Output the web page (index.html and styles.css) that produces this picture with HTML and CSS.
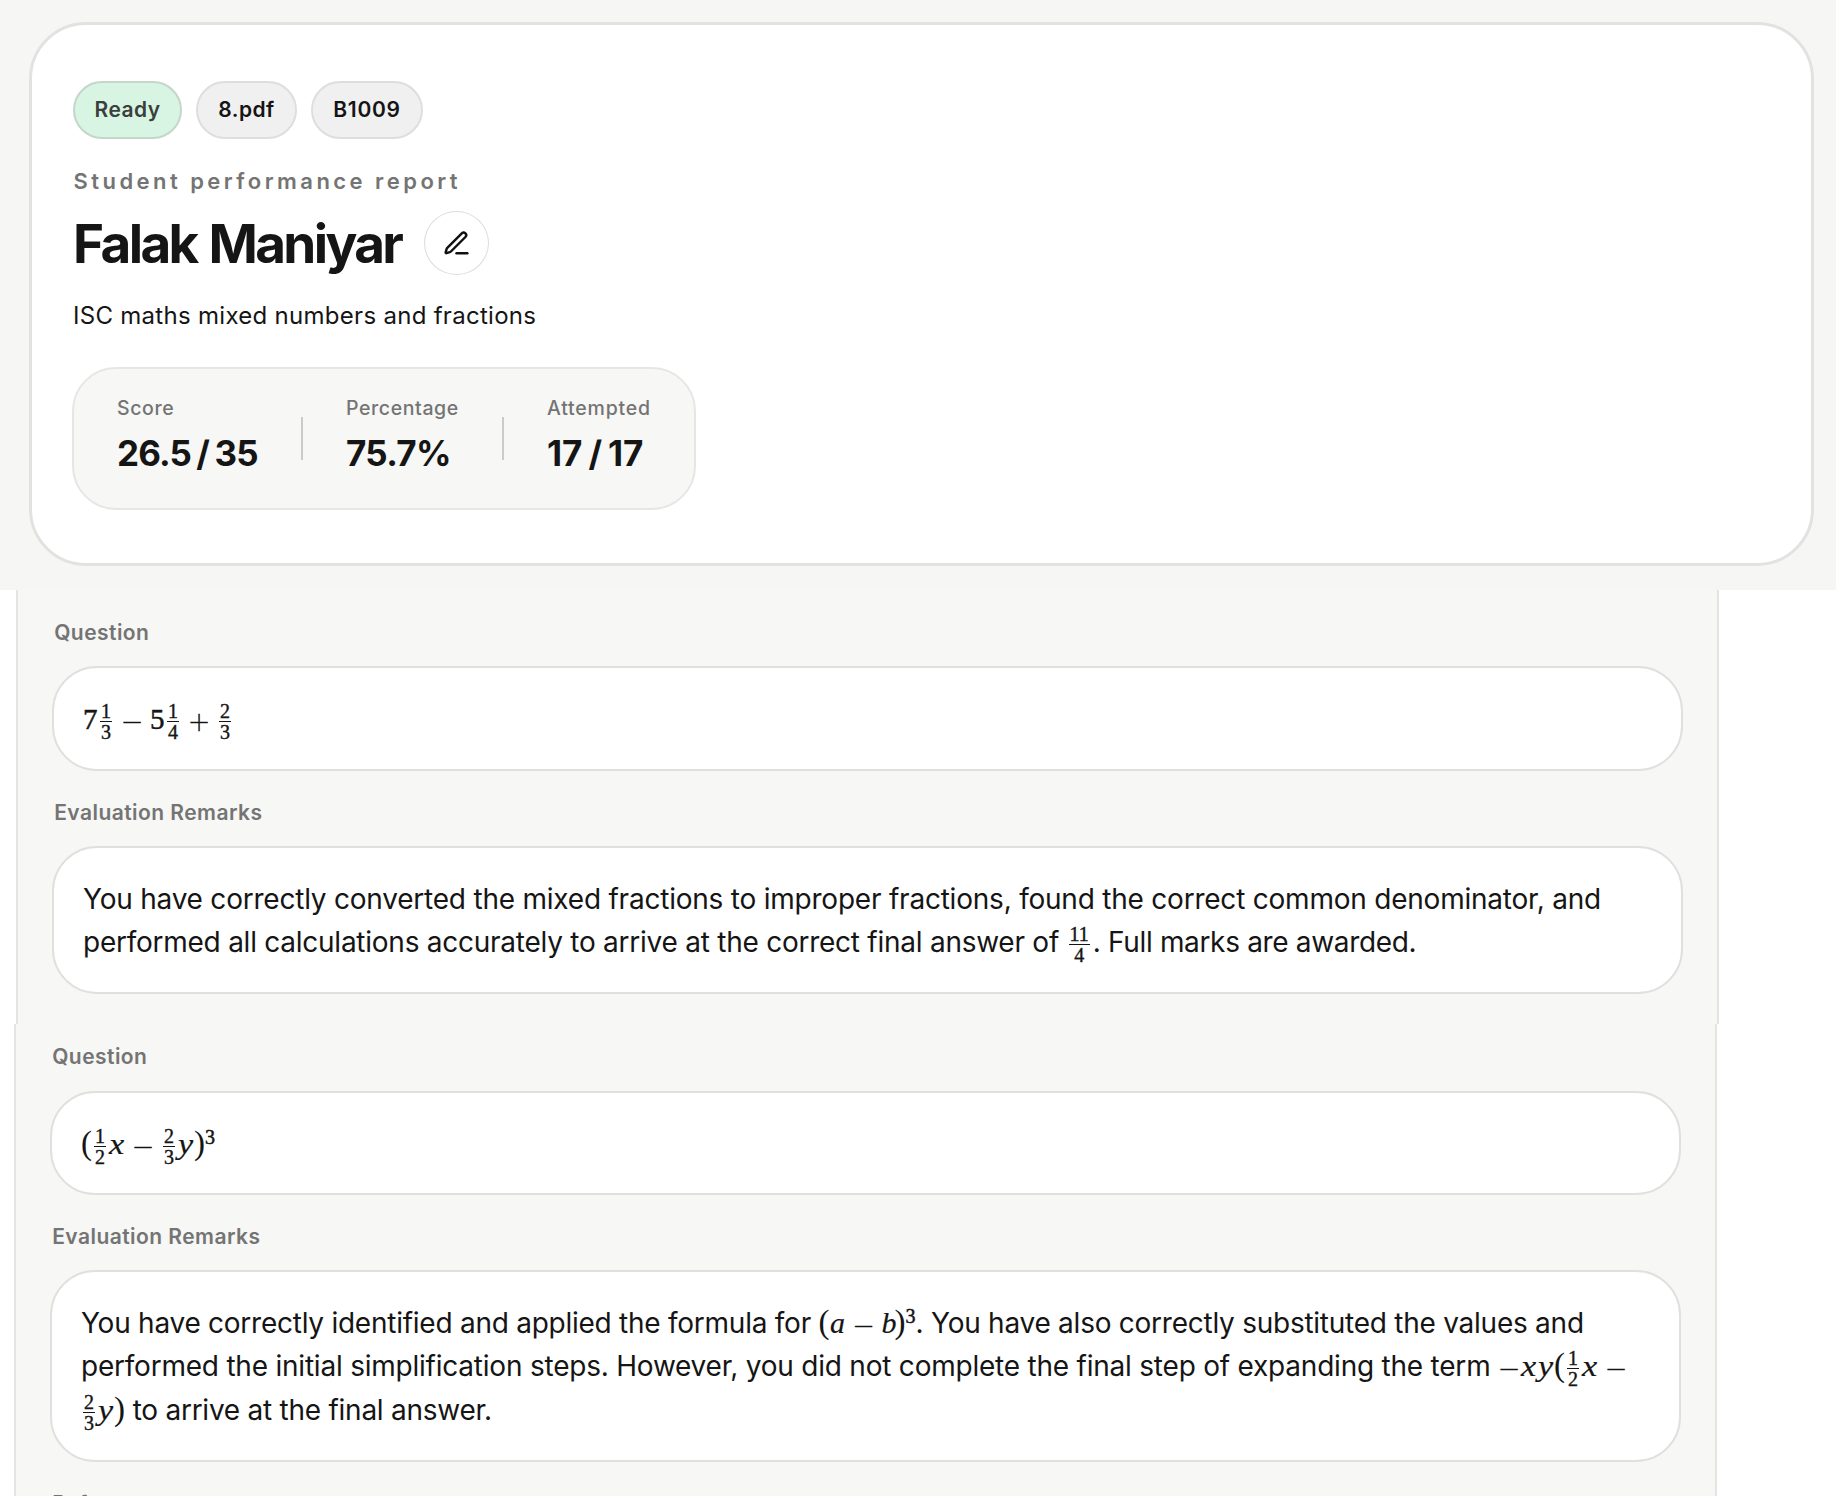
FILE: index.html
```html
<!DOCTYPE html>
<html lang="en">
<head>
<meta charset="utf-8">
<title>Student performance report</title>
<link rel="stylesheet" href="styles.css">
</head>
<body>
<header class="hero">
  <section class="card">
    <div class="pills">
      <span class="pill pill-ready">Ready</span>
      <span class="pill pill-file">8.pdf</span>
      <span class="pill pill-code">B1009</span>
    </div>
    <p class="eyebrow">Student performance report</p>
    <div class="name-row">
      <h1 class="name">Falak Maniyar</h1>
      <button class="edit" aria-label="Edit name">
        <svg viewBox="0 0 24 24" width="29" height="29" fill="none" stroke="#111" stroke-width="2" stroke-linecap="round" stroke-linejoin="round"><path d="M12 20h9"/><path d="M16.376 3.622a1 1 0 0 1 3.002 3.002L7.368 18.635a2 2 0 0 1-.855.506l-2.872.838a.5.5 0 0 1-.62-.62l.838-2.872a2 2 0 0 1 .506-.854z"/></svg>
      </button>
    </div>
    <p class="subtitle">ISC maths mixed numbers and fractions</p>
    <dl class="stats">
      <div class="stat stat-score"><dt>Score</dt><dd>26.5 / 35</dd></div>
      <div class="stat stat-percentage"><dt>Percentage</dt><dd>75.7%</dd></div>
      <div class="stat stat-attempted"><dt>Attempted</dt><dd>17 / 17</dd></div>
    </dl>
  </section>
</header>
<main>
  <section class="panel panel-first">
    <h2 class="label">Question</h2>
    <div class="box box-question"><span class="math">7<span class="frac"><span>1</span><span>3</span></span><span class="op">−</span>5<span class="frac"><span>1</span><span>4</span></span><span class="op">+</span><span class="frac"><span>2</span><span>3</span></span></span></div>
    <h2 class="label">Evaluation Remarks</h2>
    <div class="box box-two-lines">You have correctly converted the mixed fractions to improper fractions, found the correct common denominator, and<br><span class="snug">performed all calculations accurately to arrive at the correct final answer of</span> <span class="math"><span class="frac frac-wide"><span>11</span><span>4</span></span></span><span class="tight">. Full marks are awarded.</span></div>
  </section>
  <section class="panel panel-second">
    <h2 class="label">Question</h2>
    <div class="box box-question"><span class="math"><span class="paren">(</span><span class="frac"><span>1</span><span>2</span></span><span class="var">x</span><span class="op">−</span><span class="frac"><span>2</span><span>3</span></span><span class="var">y</span><span class="paren">)</span><span class="power">3</span></span></div>
    <h2 class="label">Evaluation Remarks</h2>
    <div class="box box-three-lines"><span class="snug">You have correctly identified and applied the formula for</span> <span class="math"><span class="paren">(</span><span class="var var-plain">a</span><span class="op">−</span><span class="var var-plain var-narrow">b</span><span class="paren">)</span><span class="power">3</span></span><span class="snug">. You have also correctly substituted the values and</span><br>performed the initial simplification steps. However, you did not complete the final step of expanding the term <span class="math"><span class="op op-unary">−</span><span class="var">x</span><span class="var">y</span><span class="paren">(</span><span class="frac"><span>1</span><span>2</span></span><span class="var">x</span><span class="op">−</span></span><br><span class="math"><span class="frac"><span>2</span><span>3</span></span><span class="var">y</span><span class="paren">)</span></span><span class="snug"> to arrive at the final answer.</span></div>
    <h2 class="label">Reference</h2>
  </section>
</main>
</body>
</html>
```
FILE: styles.css
```css
* { box-sizing: border-box; }

body {
  margin: 0;
  height: 1496px;
  overflow: hidden;
  background: #fff;
  color: #151515;
  font-family: Inter, "Liberation Sans", sans-serif;
}

h1, h2, p, dl, dd { margin: 0; }

/* Report header */
.hero { height: 590px; padding: 22px 22px 0 29px; background: #f6f6f4; }
.card { height: 544px; padding: 56px 41px; border: 3px solid #e2e2e0; border-radius: 57px; background: #fff; }

.pills { display: flex; gap: 14px; }
.pill {
  display: flex;
  align-items: center;
  justify-content: center;
  height: 58px;
  padding-bottom: 1px;
  border: 2px solid #dededd;
  border-radius: 29px;
  background: #f0f0f0;
  font-size: 21px;
  font-weight: 600;
  letter-spacing: 0.45px;
}
.pill-ready { width: 109px; background: #d7f5e2; border-color: #c5d6ca; color: #3b3f3c; }
.pill-file { width: 101px; }
.pill-code { width: 112px; letter-spacing: 0.7px; }

.eyebrow { margin-top: 26px; padding-left: 0.5px; font-size: 22px; line-height: 32px; font-weight: 600; letter-spacing: 3.45px; color: #747474; }

.name-row { display: flex; align-items: center; height: 64px; margin-top: 14px; gap: 23px; }
.name { padding-top: 2px; font-size: 53px; line-height: 64px; font-weight: 700; letter-spacing: -2.65px; word-spacing: 2px; }
.edit {
  display: grid;
  place-items: center;
  width: 65px;
  height: 64px;
  padding: 0;
  border: 1px solid #dcdcdc;
  border-radius: 50%;
  background: #fff;
}

.subtitle { margin-top: 23px; font-size: 24px; line-height: 36px; letter-spacing: 0.29px; }

.stats {
  display: flex;
  width: 624px;
  height: 143px;
  margin: 33px 0 0 -1.5px;
  padding: 26px 43.5px;
  border: 2px solid #e6e6e4;
  border-radius: 44px;
  background: #f7f7f5;
}
.stat { position: relative; flex: none; }
.stat dt { font-size: 19.5px; line-height: 26px; font-weight: 500; letter-spacing: 0.6px; color: #747474; }
.stat dd { margin-top: 10px; font-size: 35px; line-height: 44px; font-weight: 650; letter-spacing: -0.7px; white-space: nowrap; }
.stat-score { width: 229px; }
.stat-percentage { width: 201px; }
.stat-score dd { letter-spacing: -0.9px; word-spacing: -2px; }
.stat-attempted dt { letter-spacing: 0.8px; }
.stat-attempted dd { letter-spacing: 0; word-spacing: -2.3px; }
.stat-score::after,
.stat-percentage::after {
  content: "";
  position: absolute;
  top: 22px;
  right: 43.5px;
  width: 2px;
  height: 43px;
  background: #c9ccc9;
}

/* Question panels */
.panel { width: 1703px; padding: 0 34px; border: solid #e4e4e2; border-width: 0 2px; background: #f7f7f5; }
.panel-first { height: 434px; margin-left: 16px; padding-top: 30px; }
.panel-second { height: 472px; margin-left: 14px; padding-top: 20px; }

.label { padding-left: 2.2px; font-size: 21px; line-height: 26px; font-weight: 600; letter-spacing: 0.45px; color: #747474; }

.box {
  width: 1631px;
  margin: 20px 0 29px;
  padding: 30px 0 0 29px;
  border: 2px solid #e0e0de;
  border-radius: 45px;
  background: #fff;
  font-size: 28px;
  line-height: 43.3px;
  letter-spacing: -0.22px;
  white-space: nowrap;
}
.box-question { height: 105px; }
.panel-second .box-question { height: 104px; margin-top: 21px; }
.box-two-lines { height: 148px; }
.box-three-lines { height: 192px; }
.snug { letter-spacing: -0.25px; }
.tight { padding-left: 1px; letter-spacing: -0.33px; }

/* Inline formulas */
.math { font-family: "Liberation Serif", serif; font-size: 29px; line-height: 1; letter-spacing: 0.5px; -webkit-text-stroke: 0.5px; }
.frac {
  display: inline-flex;
  flex-direction: column;
  width: 12px;
  margin: 0 2px -4px 2px;
  vertical-align: 11px;
  font-size: 20px;
  line-height: 18px;
  letter-spacing: 0;
  text-align: center;
  -webkit-text-stroke: 0.4px;
}
.frac > :first-child { padding-bottom: 1px; border-bottom: 1px solid #151515; }
.frac > :last-child { padding-top: 1px; }
.frac-wide { width: 21px; }
.op {
  display: inline-flex;
  justify-content: center;
  width: 36px;
  height: 0;
  font: 100 41px/0 Inter, sans-serif;
  letter-spacing: 0;
  vertical-align: -4.5px;
}
.op-unary { width: 22px; }
.var { display: inline-block; width: 17px; font-size: 30px; line-height: 0; font-style: italic; letter-spacing: 0; text-align: center; transform: scaleX(1.14); -webkit-text-stroke: 0.2px; }
.var-plain { width: 16px; transform: none; }
.var-narrow { width: 13px; }
.paren { display: inline-block; width: 11px; font-size: 33px; line-height: 0; letter-spacing: 0; -webkit-text-stroke: 0; }
.power { font-size: 20px; line-height: 0; letter-spacing: 0; vertical-align: 10.3px; }
```
